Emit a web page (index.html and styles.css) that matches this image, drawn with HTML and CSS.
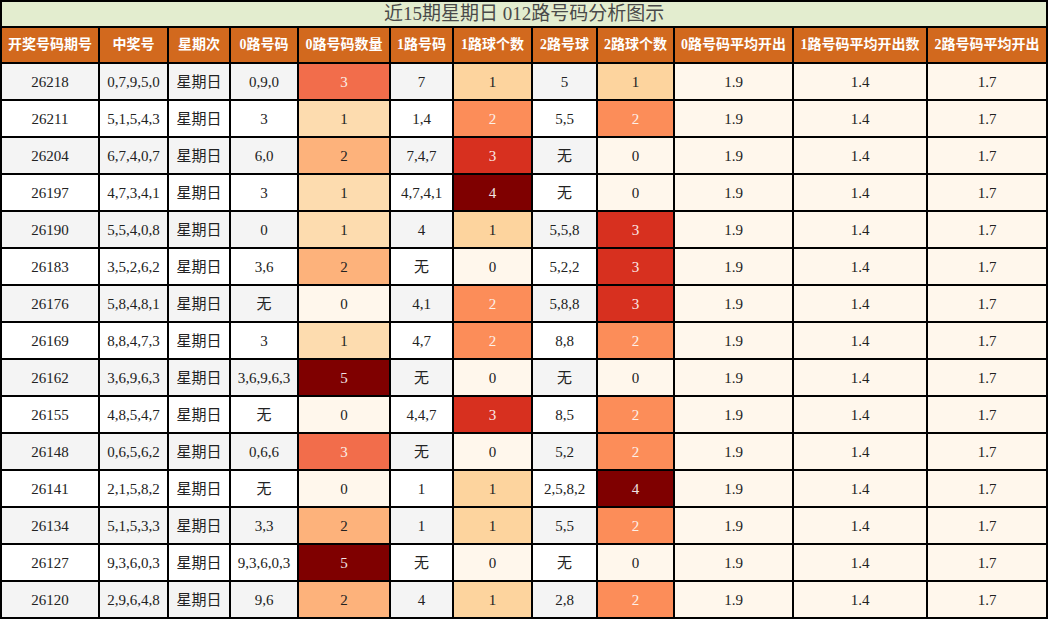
FILE: index.html
```html
<!DOCTYPE html>
<html lang="zh-CN">
<head>
<meta charset="utf-8">
<title>近15期星期日 012路号码分析图示</title>
<link rel="stylesheet" href="styles.css">
</head>
<body>
<table class="grid">
  <colgroup>
    <col class="w1"><col class="w2"><col class="w3"><col class="w4"><col class="w5"><col class="w6">
    <col class="w7"><col class="w8"><col class="w9"><col class="w10"><col class="w11"><col class="w12">
  </colgroup>
  <thead>
    <tr class="title-row"><th colspan="12" class="title">近15期星期日 012路号码分析图示</th></tr>
    <tr class="head-row">
      <th>开奖号码期号</th><th>中奖号</th><th>星期次</th><th>0路号码</th><th>0路号码数量</th><th>1路号码</th>
      <th>1路球个数</th><th>2路号球</th><th>2路球个数</th><th>0路号码平均开出</th><th>1路号码平均开出数</th><th>2路号码平均开出</th>
    </tr>
  </thead>
  <tbody>
    <tr><td>26218</td><td>0,7,9,5,0</td><td>星期日</td><td>0,9,0</td><td class="a3">3</td><td>7</td><td class="b1">1</td><td>5</td><td class="b1">1</td><td class="z">1.9</td><td class="z">1.4</td><td class="z">1.7</td></tr>
    <tr><td>26211</td><td>5,1,5,4,3</td><td>星期日</td><td>3</td><td class="a1">1</td><td>1,4</td><td class="b2">2</td><td>5,5</td><td class="b2">2</td><td class="z">1.9</td><td class="z">1.4</td><td class="z">1.7</td></tr>
    <tr><td>26204</td><td>6,7,4,0,7</td><td>星期日</td><td>6,0</td><td class="a2">2</td><td>7,4,7</td><td class="b3">3</td><td>无</td><td class="z">0</td><td class="z">1.9</td><td class="z">1.4</td><td class="z">1.7</td></tr>
    <tr><td>26197</td><td>4,7,3,4,1</td><td>星期日</td><td>3</td><td class="a1">1</td><td>4,7,4,1</td><td class="b4">4</td><td>无</td><td class="z">0</td><td class="z">1.9</td><td class="z">1.4</td><td class="z">1.7</td></tr>
    <tr><td>26190</td><td>5,5,4,0,8</td><td>星期日</td><td>0</td><td class="a1">1</td><td>4</td><td class="b1">1</td><td>5,5,8</td><td class="b3">3</td><td class="z">1.9</td><td class="z">1.4</td><td class="z">1.7</td></tr>
    <tr><td>26183</td><td>3,5,2,6,2</td><td>星期日</td><td>3,6</td><td class="a2">2</td><td>无</td><td class="z">0</td><td>5,2,2</td><td class="b3">3</td><td class="z">1.9</td><td class="z">1.4</td><td class="z">1.7</td></tr>
    <tr><td>26176</td><td>5,8,4,8,1</td><td>星期日</td><td>无</td><td class="z">0</td><td>4,1</td><td class="b2">2</td><td>5,8,8</td><td class="b3">3</td><td class="z">1.9</td><td class="z">1.4</td><td class="z">1.7</td></tr>
    <tr><td>26169</td><td>8,8,4,7,3</td><td>星期日</td><td>3</td><td class="a1">1</td><td>4,7</td><td class="b2">2</td><td>8,8</td><td class="b2">2</td><td class="z">1.9</td><td class="z">1.4</td><td class="z">1.7</td></tr>
    <tr><td>26162</td><td>3,6,9,6,3</td><td>星期日</td><td>3,6,9,6,3</td><td class="a5">5</td><td>无</td><td class="z">0</td><td>无</td><td class="z">0</td><td class="z">1.9</td><td class="z">1.4</td><td class="z">1.7</td></tr>
    <tr><td>26155</td><td>4,8,5,4,7</td><td>星期日</td><td>无</td><td class="z">0</td><td>4,4,7</td><td class="b3">3</td><td>8,5</td><td class="b2">2</td><td class="z">1.9</td><td class="z">1.4</td><td class="z">1.7</td></tr>
    <tr><td>26148</td><td>0,6,5,6,2</td><td>星期日</td><td>0,6,6</td><td class="a3">3</td><td>无</td><td class="z">0</td><td>5,2</td><td class="b2">2</td><td class="z">1.9</td><td class="z">1.4</td><td class="z">1.7</td></tr>
    <tr><td>26141</td><td>2,1,5,8,2</td><td>星期日</td><td>无</td><td class="z">0</td><td>1</td><td class="b1">1</td><td>2,5,8,2</td><td class="b4">4</td><td class="z">1.9</td><td class="z">1.4</td><td class="z">1.7</td></tr>
    <tr><td>26134</td><td>5,1,5,3,3</td><td>星期日</td><td>3,3</td><td class="a2">2</td><td>1</td><td class="b1">1</td><td>5,5</td><td class="b2">2</td><td class="z">1.9</td><td class="z">1.4</td><td class="z">1.7</td></tr>
    <tr><td>26127</td><td>9,3,6,0,3</td><td>星期日</td><td>9,3,6,0,3</td><td class="a5">5</td><td>无</td><td class="z">0</td><td>无</td><td class="z">0</td><td class="z">1.9</td><td class="z">1.4</td><td class="z">1.7</td></tr>
    <tr><td>26120</td><td>2,9,6,4,8</td><td>星期日</td><td>9,6</td><td class="a2">2</td><td>4</td><td class="b1">1</td><td>2,8</td><td class="b2">2</td><td class="z">1.9</td><td class="z">1.4</td><td class="z">1.7</td></tr>
  </tbody>
</table>
</body>
</html>
```
FILE: styles.css
```css
html, body {
  margin: 0;
  padding: 0;
  background: #ffffff;
}

body {
  font-family: "Liberation Serif", "Noto Sans CJK SC", serif;
  color: #222222;
}

.grid {
  table-layout: fixed;
  width: 1048px;
  border-collapse: separate;
  border-spacing: 0;
  border-top: 2px solid #000000;
  border-left: 2px solid #000000;
}

.w1 { width: 98px; }
.w2 { width: 69px; }
.w3 { width: 62px; }
.w4 { width: 68px; }
.w5 { width: 92px; }
.w6 { width: 63px; }
.w7 { width: 79px; }
.w8 { width: 65px; }
.w9 { width: 77px; }
.w10 { width: 119px; }
.w11 { width: 134px; }
.w12 { width: 120px; }

.grid th,
.grid td {
  box-sizing: border-box;
  padding: 0;
  border-right: 2px solid #000000;
  border-bottom: 2px solid #000000;
  text-align: center;
  vertical-align: middle;
  white-space: nowrap;
  overflow: hidden;
}

.title {
  height: 26px;
  background: #e3edcf;
  color: #4a4a4a;
  font-weight: normal;
  font-size: 19px;
  line-height: 22px;
}

.head-row th {
  height: 36px;
  background: #d2691e;
  color: #ffffff;
  font-weight: bold;
  font-size: 14px;
  line-height: 18px;
}

.grid td {
  height: 37px;
  font-size: 15px;
  line-height: 20px;
  background: #ffffff;
}

.grid tbody tr:nth-child(odd) td {
  background: #f4f4f4;
}

.grid tbody tr td.z { background: #fff7ec; }

.grid tbody tr td.a1 { background: #fddcaf; }
.grid tbody tr td.a2 { background: #fdb27b; }
.grid tbody tr td.a3 { background: #f26d4b; color: #fbefe8; }
.grid tbody tr td.a5 { background: #7f0000; color: #f0e4e4; }

.grid tbody tr td.b1 { background: #fdd49e; }
.grid tbody tr td.b2 { background: #fc8d59; color: #fdf1ea; }
.grid tbody tr td.b3 { background: #d7301f; color: #fbeae6; }
.grid tbody tr td.b4 { background: #7f0000; color: #f0e4e4; }
```
